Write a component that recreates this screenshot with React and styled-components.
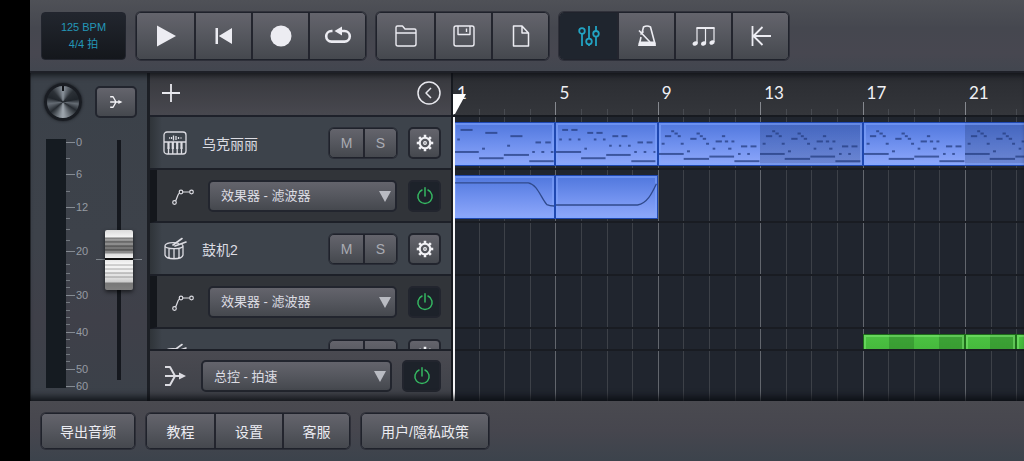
import React, { useState } from 'react';
import styled, { createGlobalStyle, css } from 'styled-components';

const GlobalStyle = createGlobalStyle`
* {
  box-sizing: border-box;
}
body {
  margin: 0;
  background: #000;
}
button, select, input {
  font: inherit;
  color: inherit;
  margin: 0;
}
`;

const raised = css`
background: linear-gradient(#64646c, #55575e 50%, #45484e);
`;

const Screen = styled.div`
display: flex;
flex-direction: column;
height: 100vh;
overflow: hidden;
padding-left: 30px;
background: #000;
color: #dcdce2;
font-family: "Liberation Sans", "Noto Sans CJK SC", sans-serif;
font-size: 14px;
`;

const Toolbar = styled.header`
display: flex;
align-items: center;
gap: 10px;
height: 73px;
padding: 0 11px;
border-bottom: 2px solid #1e2027;
background: linear-gradient(#4f5157, #45474f 40%, #474750 75%, #42464f);
`;

const Footer = styled.footer`
display: flex;
align-items: center;
gap: 11px;
height: 60px;
padding: 0 11px;
background: linear-gradient(#4a4a50, #46464e 50%, #3c434c);
`;

const Display = styled.div`
width: 85px;
height: 48px;
padding: 6px 0;
border: 1px solid #22252e;
border-radius: 4px;
background: linear-gradient(#22262e, #14171c);
color: #2497b8;
font-size: 11px;
line-height: 17px;
text-align: center;
`;

const Group = styled.div`
display: flex;
overflow: hidden;
height: ${(props) => props.$height || 48}px;
border: 1px solid #1f222b;
border-radius: 5px;
box-shadow: 0 0 0 1px rgba(31, 34, 43, .6);
`;

const GroupButton = styled.button`
${raised}
display: flex;
align-items: center;
justify-content: center;
width: ${(props) => props.$width || 57}px;
padding: 0;
border: 0;
color: #ececf2;
white-space: nowrap;
& + & {
  border-left: 2px solid #23252e;
}
${(props) => props.$active && css`
  background: #1f252e;
  color: #22a3c2;
`}
`;

const Workspace = styled.main`
display: flex;
flex: 1;
min-height: 0;
position: relative;
&::after {
  content: "";
  position: absolute;
  inset: 0;
  pointer-events: none;
  box-shadow: inset 0 7px 6px -5px rgba(8, 10, 14, .8), inset 0 -9px 7px -5px rgba(8, 10, 14, .8);
}
`;

const Mixer = styled.section`
display: flex;
flex-direction: column;
gap: 17px;
width: 120px;
padding: 10px 13px 12px;
border-left: 1px solid #24272d;
border-right: 3px solid #1c1f25;
background: linear-gradient(#3b4149, #3d424a 50%, #3f4049 75%, #3b4149);
`;

const MixerTop = styled.div`
display: flex;
align-items: center;
gap: 13px;
height: 38px;
`;

const Knob = styled.input`
appearance: none;
width: 38px;
height: 38px;
border: 3px solid #191c22;
border-radius: 50%;
background:
  linear-gradient(#101216, #101216) 50% 0 / 2px 5px no-repeat,
  conic-gradient(#8b939c, #2b3036 12%, #20252b 22%, #656c74 27%, #262b31 34%, #9aa2aa 49%, #9aa2aa 51%, #262b31 64%, #656c74 73%, #20252b 80%, #2b3036 88%, #8b939c);
box-shadow: 0 0 3px #14171b;
&::-webkit-slider-thumb {
  appearance: none;
  width: 1px;
  height: 1px;
}
`;

const SquareButton = styled.button`
${raised}
display: flex;
flex: none;
align-items: center;
justify-content: center;
width: ${(props) => props.$width || 33}px;
height: 32px;
padding: 0;
border: 2px solid #22252e;
border-radius: 5px;
color: #f2f2f6;
${(props) => props.$dark && css`
  background: #1d222a;
  color: #35b862;
`}
`;

const MixerBody = styled.div`
display: flex;
justify-content: space-between;
flex: 1;
min-height: 0;
padding-left: 2px;
`;

const Level = styled.svg`
display: block;
width: 48px;
height: 252px;
overflow: visible;
`;

const FaderSlot = styled.div`
position: relative;
display: flex;
justify-content: center;
width: 46px;
height: 240px;
margin: 2px -8px 0 0;
background: linear-gradient(#15181e, #15181e) 50% 0 / 4px 100% no-repeat;
&::before {
  content: "";
  position: absolute;
  top: 119px;
  left: 0;
  right: 0;
  height: 1px;
  background: #7d838a;
}
`;

const Fader = styled.input`
appearance: none;
position: relative;
writing-mode: vertical-lr;
direction: rtl;
width: 28px;
height: 240px;
background: transparent;
&::-webkit-slider-thumb {
  appearance: none;
  width: 28px;
  height: 60px;
  border-radius: 2px;
  background: linear-gradient(
    #dcdcdc 0, #f4f4f4 7px, #777 8px, #aaa 10px, #555 12px, #8d8d8d 13px, #8d8d8d 15px, #444 16px,
    #777 17px, #777 19px, #3c3c3c 20px, #8a8a8a 21px, #8a8a8a 23px, #ddd 24px, #eee 28px, #111 28px,
    #111 30px, #e8e8e8 30px, #f6f6f6 34px, #aaa 35px, #f2f2f2 36px, #f2f2f2 38px, #aaa 39px,
    #eee 40px, #eee 42px, #999 43px, #e2e2e2 44px, #e2e2e2 46px, #999 47px, #ddd 48px, #ccc 52px,
    #777 53px, #808080 60px);
  box-shadow: 0 2px 4px rgba(0, 0, 0, .6);
}
`;

const Tracks = styled.section`
display: flex;
flex-direction: column;
width: 303px;
border-right: 2px solid #16191f;
`;

const TracksHead = styled.div`
display: flex;
align-items: center;
justify-content: space-between;
height: 44px;
padding: 0 10px 2px;
border-bottom: 2px solid #1e212a;
background: linear-gradient(#37383d, #48484f);
`;

const IconButton = styled.button`
display: flex;
padding: 0;
border: 0;
background: none;
color: #e8e8ee;
`;

const Rows = styled.div`
flex: 1;
min-height: 0;
overflow: hidden;
`;

const Row = styled.div`
display: flex;
align-items: center;
gap: 11px;
height: 53px;
padding: 0 10px 0 13px;
border-bottom: 2px solid #1d2028;
background: linear-gradient(90deg, #2f3439, #3d434b 12px);
`;

const EffectRow = styled(Row)`
padding-left: 14px;
border-left: 7px solid #14171c;
background: #313439;
`;

const MasterRow = styled(Row)`
gap: 10px;
height: 52px;
border-top: 2px solid #1d2028;
border-bottom: 0;
background: linear-gradient(#4a4a51, #3e4148);
`;

const TrackName = styled.span`
flex: 1;
padding-left: 4px;
font-size: 14px;
white-space: nowrap;
`;

const MuteSolo = styled(GroupButton)`
color: #a9abb2;
font-size: 14px;
`;

const SelectBox = styled.div`
position: relative;
flex: 1;
margin-left: ${(props) => props.$indent || 0}px;
&::after {
  content: "";
  position: absolute;
  top: 11px;
  right: 6px;
  border: 6px solid transparent;
  border-top: 11px solid #b9bbc2;
  border-bottom: 0;
  pointer-events: none;
}
`;

const Select = styled.select`
${raised}
appearance: none;
display: block;
width: 100%;
height: 32px;
padding: 0 24px 0 11px;
border: 2px solid #22252e;
border-radius: 5px;
font-size: 13px;
`;

const Timeline = styled.section`
position: relative;
flex: 1;
min-width: 0;
overflow: hidden;
background: #20252e;
`;

const Song = styled.div`
position: relative;
display: flex;
flex-direction: column;
width: 1024px;
height: 100%;
`;

const barColumns = css`
display: grid;
grid-template-columns: repeat(40, 1fr);
`;

const BarLines = styled.div`
${barColumns}
position: absolute;
inset: 44px 0 0;
`;

const BarLine = styled.i`
border-left: 1px solid ${(props) => (props.$major ? '#62666d' : '#3d4148')};
`;

const Ruler = styled.div`
${barColumns}
align-items: end;
height: 44px;
border-bottom: 2px solid #171a20;
background: linear-gradient(#2a2c31, #34363b);
`;

const Tick = styled.i`
height: ${(props) => (props.$major ? 13 : 6)}px;
border-left: 1px solid ${(props) => (props.$major ? '#85888e' : '#484b51')};
grid-row: 1;
grid-column: ${(props) => props.$bar};
`;

const BarNumber = styled.span`
align-self: start;
padding: 10px 0 0 4px;
grid-row: 1;
grid-column: ${(props) => props.$bar} / span 2;
color: #f0f0f4;
font-family: Lato, sans-serif;
font-size: 17px;
line-height: 20px;
`;

const Lanes = styled.div`
position: relative;
flex: 1;
min-height: 0;
overflow: hidden;
`;

const Lane = styled.div`
${barColumns}
height: 53px;
padding: 5px 0 4px;
border-bottom: 2px solid #191c22;
`;

const MasterLane = styled.div`
position: relative;
height: 52px;
border-top: 2px solid #191c22;
`;

const palette = {
  blue: { fill: '#5077dd, #6f90ee 50%, #8ea8fb', edge: '#1f48b0', glow: 'rgba(130, 165, 255, .55)', dim: 'rgba(35, 60, 120, .3)' },
  green: { fill: '#4cc243, #45b83c 40%, #45b83c', edge: '#1d6b1a', glow: 'rgba(130, 235, 120, .5)', dim: 'rgba(25, 90, 25, .3)' },
};

const Clip = styled.div`
display: flex;
min-width: 0;
grid-row: 1;
grid-column: ${(props) => props.$start} / span ${(props) => props.$length};
border: 1px solid ${(props) => palette[props.$color].edge};
background:
  linear-gradient(90deg, ${(props) => (props.$dim || []).map(([from, to]) => `transparent ${from}%, ${palette[props.$color].dim} ${from}%, ${palette[props.$color].dim} ${to}%, transparent ${to}%`).join(', ') || 'transparent, transparent'}),
  linear-gradient(${(props) => palette[props.$color].fill});
box-shadow: inset 0 0 0 2px ${(props) => palette[props.$color].glow};
`;

const ClipArt = styled.svg`
display: block;
flex: 1;
min-width: 0;
height: 100%;
`;

const Playhead = styled.div`
position: absolute;
top: 44px;
bottom: 0;
left: 0;
width: 2px;
background: #f4f4f6;
`;

const PlayheadFlag = styled.svg`
position: absolute;
top: -24px;
left: 0;
`;

// notes are [x1, x2, y] inside a 308 x 129 clip
const sparse = [
  [20, 57, 21], [96, 133, 30], [173, 210, 40], [250, 267, 59], [280, 297, 59],
  [10, 18, 50], [86, 95, 78], [163, 172, 69], [240, 248, 88], [268, 277, 88], [297, 305, 88],
  [2, 76, 88], [77, 152, 107], [153, 230, 97], [231, 306, 116],
];

const medium = [
  [19, 37, 21], [47, 66, 21], [96, 114, 30], [124, 143, 30], [173, 191, 40], [201, 219, 40],
  [250, 267, 59], [278, 296, 59], [10, 18, 50], [39, 47, 50], [67, 75, 50], [116, 124, 50],
  [144, 152, 50], [87, 95, 78], [163, 171, 69], [193, 200, 69], [221, 229, 69], [240, 248, 88],
  [269, 277, 88], [299, 305, 88], [0, 77, 88], [77, 152, 107], [154, 229, 97], [231, 305, 116],
];

const dense = [
  [8, 17, 63], [18, 37, 40], [37, 46, 25], [47, 57, 32], [57, 66, 40], [66, 75, 63],
  [85, 94, 86], [95, 114, 48], [114, 124, 32], [124, 133, 40], [133, 143, 48], [143, 152, 63],
  [163, 171, 78], [172, 191, 56], [191, 201, 40], [200, 210, 56], [210, 220, 78], [220, 229, 56],
  [240, 248, 94], [249, 268, 71], [268, 276, 94], [278, 296, 71],
  [0, 75, 94], [75, 152, 109], [153, 228, 102], [229, 305, 116],
];

const effects = ['效果器 - 滤波器'];

const tracks = [
  {
    id: 1,
    name: '乌克丽丽',
    icon: 'keys',
    clips: [
      { start: 1, length: 4, notes: [sparse] },
      { start: 5, length: 4, notes: [medium] },
      { start: 9, length: 8, notes: [dense, dense], dim: [[50, 100]] },
      { start: 17, length: 8, notes: [dense, dense], dim: [[50, 100]] },
    ],
    automation: [
      { start: 1, length: 4, curve: 'M0 21H228C256 26 266 66 285 88Q294 92 308 92' },
      { start: 5, length: 4, curve: 'M0 89H250C280 84 294 54 308 24' },
    ],
  },
  { id: 2, name: '鼓机2', icon: 'drum', clips: [], automation: [] },
  {
    id: 3,
    name: '鼓机3',
    icon: 'drum',
    color: 'green',
    clips: [
      { start: 17, length: 4, dim: [[25, 50], [75, 100]] },
      { start: 21, length: 2, dim: [[50, 100]] },
      { start: 23, length: 2, dim: [[50, 100]] },
    ],
  },
];

const Icon = ({ size = 24, width = 1.6, children }) => (
  <svg width={size} height={size} viewBox="0 0 24 24" fill="none" stroke="currentColor"
    strokeWidth={width} strokeLinejoin="round" aria-hidden="true">
    {children}
  </svg>
);

const PlayIcon = () => <Icon><path d="M3 1.500v21L22 12z" fill="currentColor" stroke="none" /></Icon>;
const RewindIcon = () => (
  <Icon><path d="M3.500 4H6v16H3.500zM20 4v16L6.800 12z" fill="currentColor" stroke="none" /></Icon>
);
const RecordIcon = () => <Icon><circle cx="12" cy="12" r="10.5" fill="currentColor" stroke="none" /></Icon>;
const LoopIcon = () => (
  <svg width="28" height="24" viewBox="0 0 28 24" fill="none" stroke="currentColor" strokeWidth="2.6" aria-hidden="true">
    <path d="M8.500 7H7.500a5.300 5.300 0 0 0 0 10.600h13a5.300 5.300 0 0 0 0-10.600H16" />
    <path d="M18 2.500v9L10.500 7z" fill="currentColor" stroke="none" />
  </svg>
);
const FolderIcon = () => (
  <Icon width={1.4}>
    <path d="M2 20V3.500Q2 2 3.500 2h5L11 5h9.500Q22 5 22 6.500V20q0 2-2 2H4q-2 0-2-2zM2 9h20" />
  </Icon>
);
const SaveIcon = () => (
  <Icon width={1.4}>
    <rect x="2" y="2" width="20" height="20" rx="2" />
    <path d="M6 2v8.500h12V2M14.500 4.500v3.500" />
  </Icon>
);
const FileIcon = () => (
  <Icon width={1.5}><path d="M4.500 2H13l6.500 7v13h-15zM13 2v7h6.500" /></Icon>
);
const SlidersIcon = () => (
  <Icon width={1.8}>
    <path d="M5 9.500V22M12 2v13M12 20v2M19 2v5M19 12.500V22" />
    <circle cx="5" cy="7" r="2.8" />
    <circle cx="12" cy="17.500" r="2.8" />
    <circle cx="19" cy="9.800" r="2.8" />
  </Icon>
);
const MetronomeIcon = () => (
  <Icon width={1.6}>
    <path d="M7 9l1.500-6q3.500-2 7 0L20 20H4.500L6 13" />
    <path d="M4 17.500h16l1 4.500H3z" fill="currentColor" stroke="none" />
    <path d="M15 18L4 6.500M5.500 10.500l3-3" />
  </Icon>
);
const NotesIcon = () => (
  <Icon width={1.2}>
    <path d="M5 19V4h17V18M13.500 19V4" />
    <path d="M4.500 4h18" strokeWidth="2" />
    <g fill="currentColor" stroke="none">
      <ellipse cx="3.200" cy="19.500" rx="2.700" ry="2" transform="rotate(-20 3.200 19.500)" />
      <ellipse cx="11.600" cy="19.500" rx="2.700" ry="2" transform="rotate(-20 11.600 19.500)" />
      <ellipse cx="20" cy="18.500" rx="2.700" ry="2" transform="rotate(-20 20 18.500)" />
    </g>
  </Icon>
);
const ReturnIcon = () => <Icon width={1.8}><path d="M3.500 2v20M13.500 3l-9 9 9 9M4.500 12H22" /></Icon>;
const PlusIcon = () => <Icon width={1.8}><path d="M11 3v18M2 12h18" /></Icon>;
const CollapseIcon = () => (
  <Icon width={1.5}><circle cx="12" cy="12" r="11" /><path d="M14 7l-5 5 5 5" /></Icon>
);
const MergeIcon = ({ size = 24, width }) => (
  <Icon size={size} width={width || 2}>
    <path d="M2 3h5l5 9-5 9H2M2 12h15" />
    <path d="M16 8.500l7 3.500-7 3.500z" fill="currentColor" stroke="none" />
  </Icon>
);
const PowerIcon = () => (
  <Icon size={18} width={2}>
    <path d="M8 4a9.500 9.500 0 1 0 8 0M12 1v11" strokeLinecap="round" />
  </Icon>
);
const GearIcon = () => (
  <Icon size={18} width={2.8}>
    <circle cx="12" cy="12" r="7" />
    <circle cx="12" cy="12" r="1.8" strokeWidth="1.6" />
    {[0, 45, 90, 135, 180, 225, 270, 315].map((angle) => (
      <path key={angle} d="M12 5V1" strokeWidth="3.4" transform={`rotate(${angle} 12 12)`} />
    ))}
  </Icon>
);
const KeysIcon = () => (
  <Icon width={1.3}>
    <rect x="1" y="1" width="22" height="22" rx="3" />
    <path d="M1 11h22M5.500 16v7M9.800 16v7M14.200 16v7M18.500 16v7M6 7h1M8.500 6v2M10.500 4.500v5M13 5v4M15.500 6v2M17.500 7h1" />
    <path d="M5.500 11v7M9.800 11v7M14.200 11v7M18.500 11v7" strokeWidth="2.2" />
  </Icon>
);
const DrumIcon = () => (
  <Icon width={1.3}>
    <path d="M16 6.500C10 4.500 2 6 2 9s17 4 18 0q0-1-1.500-1.800M2 9v9c1 5 17 5 18 0V9M6 11.500v9.500M11 12v10M16 11.500v9.500" />
    <path d="M10 8l9-6.500M12 9l11-4" strokeWidth="1.6" strokeLinecap="round" />
  </Icon>
);
const CurveIcon = () => (
  <Icon width={1.2}>
    <circle cx="3.500" cy="18.500" r="1.800" />
    <circle cx="10" cy="8" r="1.800" />
    <circle cx="20.500" cy="8" r="1.800" />
    <path d="M4.500 17C6 15 6.500 10 8.500 9M12 8h6.500" />
  </Icon>
);

const transport = [['播放', PlayIcon], ['回到开头', RewindIcon], ['录音', RecordIcon], ['循环', LoopIcon]];
const files = [['打开', FolderIcon], ['保存', SaveIcon], ['新建', FileIcon]];
const views = [['混音器', SlidersIcon], ['节拍器', MetronomeIcon], ['音符', NotesIcon], ['返回', ReturnIcon]];

const ButtonSet = ({ items, active, onPick }) => (
  <Group>
    {items.map(([label, Glyph]) => (
      <GroupButton key={label} aria-label={label} $active={active === label} onClick={() => onPick && onPick(label)}>
        <Glyph />
      </GroupButton>
    ))}
  </Group>
);

const labels = [[0, 4], [6, 36], [12, 69], [20, 113], [30, 157], [40, 194], [50, 231], [60, 248]];
const minor = [20, 53, 80, 91, 102, 126, 135, 142, 149, 164, 172, 179, 186, 201, 209, 216, 223];

const LevelMeter = () => (
  <Level viewBox="0 0 48 252">
    <rect width="20" height="249" y="1" fill="#151b21" />
    {labels.map(([db, y]) => (
      <g key={db}>
        <path d={`M20 ${y}.5h9`} stroke="#858b92" />
        <text x="30" y={y + 4} fill="#969ba2" fontSize="11">{db}</text>
      </g>
    ))}
    {minor.map((y) => <path key={y} d={`M20 ${y}.5h4`} stroke="#737980" />)}
  </Level>
);

const ClipView = ({ clip, color = 'blue' }) => (
  <Clip $start={clip.start} $length={clip.length} $color={color} $dim={clip.dim}>
    {(clip.notes || []).map((part, i) => (
      <ClipArt key={i} viewBox="0 0 308 129" preserveAspectRatio="none">
        {part.map(([from, to, y]) => (
          <rect key={`${from}-${y}`} x={from} y={y - 3} width={to - from} height="6" fill="#253d80" fillOpacity=".75" />
        ))}
      </ClipArt>
    ))}
    {clip.curve && (
      <ClipArt viewBox="0 0 308 129" preserveAspectRatio="none">
        <path d={clip.curve} fill="none" stroke="#304a8c" strokeWidth="4" />
      </ClipArt>
    )}
  </Clip>
);

const TrackRow = ({ track }) => (
  <>
    <Row>
      {track.icon === 'keys' ? <KeysIcon /> : <DrumIcon />}
      <TrackName>{track.name}</TrackName>
      <Group $height={30}>
        <MuteSolo $width={33} aria-label="静音">M</MuteSolo>
        <MuteSolo $width={33} aria-label="独奏">S</MuteSolo>
      </Group>
      <SquareButton aria-label="音轨设置"><GearIcon /></SquareButton>
    </Row>
    {track.automation && (
      <EffectRow>
        <CurveIcon />
        <SelectBox $indent={2}>
          <Select aria-label="自动化参数">
            {effects.map((name) => <option key={name}>{name}</option>)}
          </Select>
        </SelectBox>
        <SquareButton $dark aria-label="启用自动化"><PowerIcon /></SquareButton>
      </EffectRow>
    )}
  </>
);

const App = () => {
  const [view, setView] = useState('混音器');
  const [volume, setVolume] = useState(50);
  const bars = Array.from({ length: 40 }, (_, i) => i + 1);
  const isMajor = (bar) => bar % 4 === 1;

  return (
    <Screen>
      <GlobalStyle />
      <Toolbar>
        <Display>
          <div>125 BPM</div>
          <div>4/4 拍</div>
        </Display>
        <ButtonSet items={transport} />
        <ButtonSet items={files} />
        <ButtonSet items={views} active={view} onPick={setView} />
      </Toolbar>

      <Workspace>
        <Mixer>
          <MixerTop>
            <Knob type="range" aria-label="声像" defaultValue="50" />
            <SquareButton $width={42} aria-label="输出"><MergeIcon size={14} width={2.4} /></SquareButton>
          </MixerTop>
          <MixerBody>
            <LevelMeter />
            <FaderSlot>
              <Fader type="range" aria-label="音量" value={volume} onChange={(e) => setVolume(Number(e.target.value))} />
            </FaderSlot>
          </MixerBody>
        </Mixer>

        <Tracks>
          <TracksHead>
            <IconButton aria-label="添加音轨"><PlusIcon /></IconButton>
            <IconButton aria-label="收起"><CollapseIcon /></IconButton>
          </TracksHead>
          <Rows>
            {tracks.map((track) => <TrackRow key={track.id} track={track} />)}
          </Rows>
          <MasterRow>
            <MergeIcon />
            <SelectBox $indent={4}>
              <Select aria-label="总控参数">
                <option>总控 - 拍速</option>
              </Select>
            </SelectBox>
            <SquareButton $dark $width={39} aria-label="启用总控"><PowerIcon /></SquareButton>
          </MasterRow>
        </Tracks>

        <Timeline>
          <Song>
            <BarLines>
              {bars.map((bar) => <BarLine key={bar} $major={isMajor(bar)} />)}
            </BarLines>
            <Ruler>
              {bars.map((bar) => <Tick key={bar} $bar={bar} $major={isMajor(bar)} />)}
              {bars.filter(isMajor).map((bar) => <BarNumber key={bar} $bar={bar}>{bar}</BarNumber>)}
            </Ruler>
            <Lanes>
              {tracks.map((track) => (
                <React.Fragment key={track.id}>
                  <Lane>
                    {track.clips.map((clip) => <ClipView key={clip.start} clip={clip} color={track.color} />)}
                  </Lane>
                  {track.automation && (
                    <Lane>
                      {track.automation.map((clip) => <ClipView key={clip.start} clip={clip} />)}
                    </Lane>
                  )}
                </React.Fragment>
              ))}
            </Lanes>
            <MasterLane />
          </Song>
          <Playhead>
            <PlayheadFlag width="14" height="22" viewBox="0 0 14 22">
              <path d="M0 1h13L2 21H0z" fill="#fff" />
            </PlayheadFlag>
          </Playhead>
        </Timeline>
      </Workspace>

      <Footer>
        <Group $height={36}><GroupButton $width={92}>导出音频</GroupButton></Group>
        <Group $height={36}>
          <GroupButton $width={67}>教程</GroupButton>
          <GroupButton $width={68}>设置</GroupButton>
          <GroupButton $width={67}>客服</GroupButton>
        </Group>
        <Group $height={36}><GroupButton $width={126}>用户/隐私政策</GroupButton></Group>
      </Footer>
    </Screen>
  );
};

export default App;
